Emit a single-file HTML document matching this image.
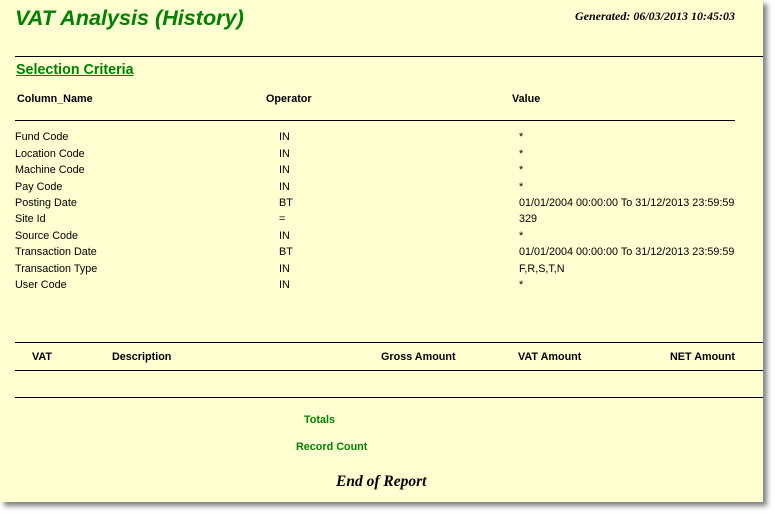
<!DOCTYPE html>
<html><head><meta charset="utf-8"><style>
body{margin:0;background:#fff;width:775px;height:514px;position:relative;overflow:hidden;font-family:"Liberation Sans",Arial,sans-serif}
#pg{position:absolute;left:0;top:0;width:763px;height:502px;background:#ffffd2;box-shadow:4px 4px 5px rgba(0,0,0,.5)}
.t{position:absolute;white-space:nowrap;font-size:10.8px;color:#000;line-height:13px}
.b{font-weight:bold}
.g{color:#008000}
.l{position:absolute;height:1px;background:#000}
</style></head><body><div id="pg">
<div class="t g b" style="left:15px;top:6px;font-size:21.6px;line-height:24px;font-style:italic">VAT Analysis (History)</div>
<div class="t b" style="left:575px;top:10px;font-family:'Liberation Serif',serif;font-style:italic;font-size:12px">Generated: 06/03/2013 10:45:03</div>
<div class="l" style="left:15px;top:56px;width:748px"></div>
<div class="t g b" style="left:16px;top:62px;font-size:14.3px;line-height:16px;text-decoration:underline">Selection Criteria</div>
<div class="t b" style="left:17px;top:93px">Column_Name</div>
<div class="t b" style="left:266px;top:93px">Operator</div>
<div class="t b" style="left:512px;top:93px">Value</div>
<div class="l" style="left:15px;top:120px;width:720px"></div>
<div class="t" style="left:15px;top:131px">Fund Code</div><div class="t" style="left:279px;top:131px">IN</div><div class="t" style="left:519px;top:131px">*</div>
<div class="t" style="left:15px;top:148px">Location Code</div><div class="t" style="left:279px;top:148px">IN</div><div class="t" style="left:519px;top:148px">*</div>
<div class="t" style="left:15px;top:164px">Machine Code</div><div class="t" style="left:279px;top:164px">IN</div><div class="t" style="left:519px;top:164px">*</div>
<div class="t" style="left:15px;top:181px">Pay Code</div><div class="t" style="left:279px;top:181px">IN</div><div class="t" style="left:519px;top:181px">*</div>
<div class="t" style="left:15px;top:197px">Posting Date</div><div class="t" style="left:279px;top:197px">BT</div><div class="t" style="left:519px;top:197px">01/01/2004 00:00:00 To 31/12/2013 23:59:59</div>
<div class="t" style="left:15px;top:213px">Site Id</div><div class="t" style="left:279px;top:213px">=</div><div class="t" style="left:519px;top:213px">329</div>
<div class="t" style="left:15px;top:230px">Source Code</div><div class="t" style="left:279px;top:230px">IN</div><div class="t" style="left:519px;top:230px">*</div>
<div class="t" style="left:15px;top:246px">Transaction Date</div><div class="t" style="left:279px;top:246px">BT</div><div class="t" style="left:519px;top:246px">01/01/2004 00:00:00 To 31/12/2013 23:59:59</div>
<div class="t" style="left:15px;top:263px">Transaction Type</div><div class="t" style="left:279px;top:263px">IN</div><div class="t" style="left:519px;top:263px">F,R,S,T,N</div>
<div class="t" style="left:15px;top:279px">User Code</div><div class="t" style="left:279px;top:279px">IN</div><div class="t" style="left:519px;top:279px">*</div>
<div class="l" style="left:15px;top:342px;width:748px"></div>
<div class="t b" style="left:32px;top:351px">VAT</div>
<div class="t b" style="left:112px;top:351px">Description</div>
<div class="t b" style="left:381px;top:351px">Gross Amount</div>
<div class="t b" style="left:518px;top:351px">VAT Amount</div>
<div class="t b" style="left:670px;top:351px">NET Amount</div>
<div class="l" style="left:15px;top:370px;width:748px"></div>
<div class="l" style="left:15px;top:397px;width:748px"></div>
<div class="t g b" style="left:304px;top:414px">Totals</div>
<div class="t g b" style="left:296px;top:441px">Record Count</div>
<div class="t b" style="left:336px;top:473px;font-family:'Liberation Serif',serif;font-style:italic;font-size:15.5px;line-height:17px">End of Report</div>
</div></body></html>
